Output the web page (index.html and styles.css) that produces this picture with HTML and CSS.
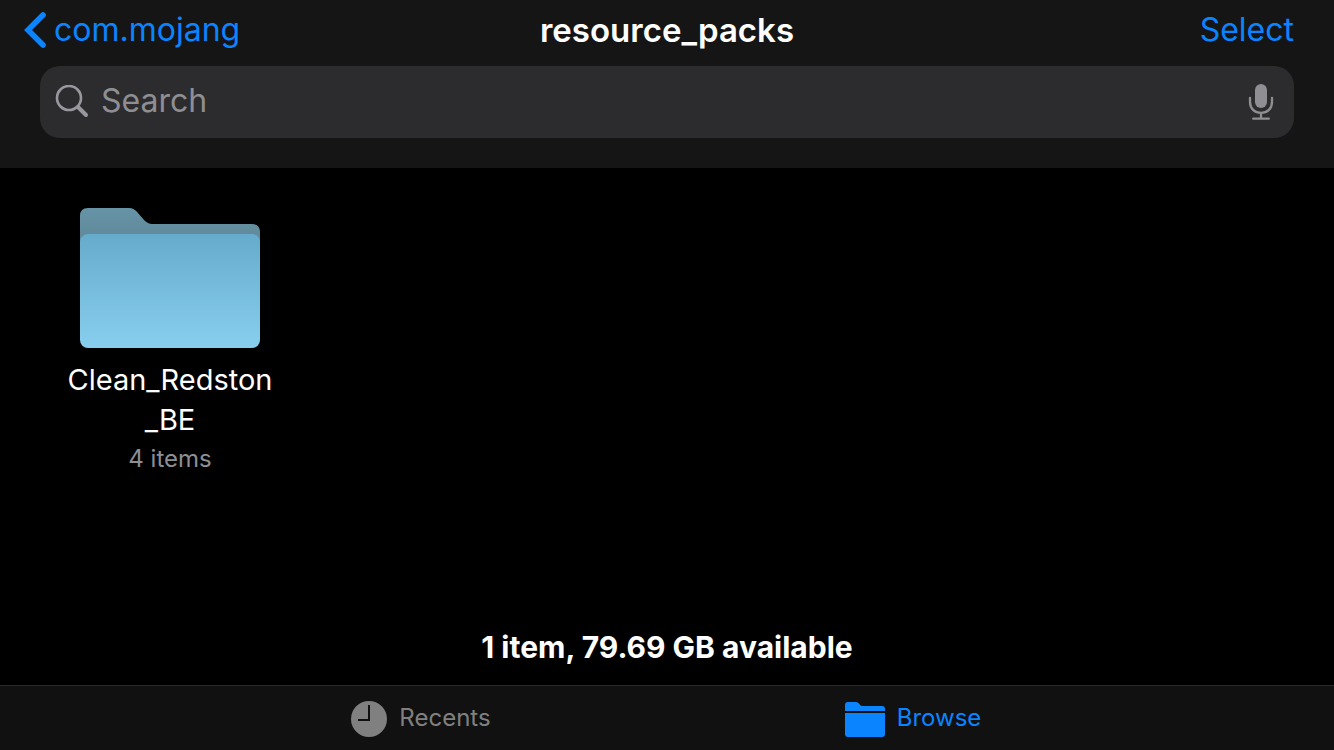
FILE: index.html
```html
<!DOCTYPE html>
<html lang="en">
<head>
<meta charset="utf-8">
<meta name="viewport" content="width=device-width, initial-scale=1">
<title>resource_packs</title>
<link rel="stylesheet" href="styles.css">
</head>
<body>
<header class="header">
  <nav class="navbar">
    <a class="nav-link back" href="#">
      <svg class="back-icon" viewBox="0 0 22 36" aria-hidden="true"><path d="M19 3 4 18l15 15" fill="none" stroke="currentColor" stroke-width="5.600" stroke-linecap="round" stroke-linejoin="miter"/></svg>
      <span>com.mojang</span>
    </a>
    <h1 class="title">resource_packs</h1>
    <button class="nav-link select" type="button">Select</button>
  </nav>
  <div class="search">
    <svg class="search-icon" viewBox="0 0 34 34" aria-hidden="true"><circle cx="14" cy="13" r="12"/><path class="handle" d="m23 22 8 8"/></svg>
    <input class="search-input" type="text" placeholder="Search" aria-label="Search">
    <button class="mic" type="button" aria-label="Dictate">
      <svg class="mic-icon" viewBox="0 0 24 36" aria-hidden="true"><rect x="6" y="0" width="12" height="24" rx="6" fill="currentColor"/><path d="M1 14v4c0 6.500 4.500 10.800 11 10.800S23 24.500 23 18v-4M12 29v5M4.200 34.700h15.600" fill="none" stroke="currentColor" stroke-width="2.300" stroke-linecap="round"/></svg>
    </button>
  </div>
</header>
<main class="content">
  <div class="grid">
    <a class="item" href="#">
      <svg class="folder" viewBox="0 0 180 140" aria-hidden="true">
        <defs>
          <linearGradient id="front" x1="0" y1="0" x2="0" y2="1"><stop offset="0" stop-color="#66abcb"/><stop offset="1" stop-color="#88ceee"/></linearGradient>
          <linearGradient id="rear" x1="0" y1="0" x2="0" y2="1"><stop offset="0" stop-color="#6693a6"/><stop offset="1" stop-color="#5e8798"/></linearGradient>
        </defs>
        <path fill="url(#rear)" d="M0 8Q0 0 8 0H49Q54 0 58 5L64 12Q68 16 72 16H172Q180 16 180 24V40H0Z"/>
        <rect y="26" width="180" height="114" rx="8" fill="url(#front)"/>
      </svg>
      <span class="name">Clean_Redston<wbr>_BE</span>
      <span class="count">4 items</span>
    </a>
  </div>
  <p class="status">1 item, 79.69 GB available</p>
</main>
<nav class="tabbar">
  <a class="tab" href="#">
    <svg class="clock-icon" viewBox="0 0 36 36" aria-hidden="true"><circle cx="18" cy="18" r="18" fill="currentColor"/><path d="M18 4v15H7" fill="none" stroke="#111" stroke-width="2"/></svg>
    <span>Recents</span>
  </a>
  <a class="tab active" href="#" aria-current="page">
    <svg class="browse-icon" viewBox="0 0 40 35" aria-hidden="true" fill="currentColor"><path d="M0 9V3Q0 0 3 0H11Q13 0 14.500 2L15 3Q16 4 18 4H37Q40 4 40 7V9Z"/><path d="M0 11H40V32Q40 35 37 35H3Q0 35 0 32Z"/></svg>
    <span>Browse</span>
  </a>
</nav>
</body>
</html>
```
FILE: styles.css
```css
* {
  box-sizing: border-box;
}

body {
  margin: 0;
  min-height: 100vh;
  display: flex;
  flex-direction: column;
  background: #000;
  color: #fff;
  font-family: Inter, "Liberation Sans", sans-serif;
}

a {
  text-decoration: none;
}

button {
  padding: 0;
  border: 0;
  background: none;
  font: inherit;
}

svg {
  display: block;
  flex: none;
}

.header {
  padding-bottom: 30px;
  background: #151515;
}

.navbar {
  display: grid;
  grid-template-columns: 1fr auto 1fr;
  align-items: center;
  height: 66px;
  padding: 0 40px 6px;
  font-size: 32px;
  line-height: 40px;
}

.nav-link {
  color: #0a84ff;
}

.back {
  display: flex;
  align-items: center;
  gap: 8px;
  justify-self: start;
  margin-left: -16px;
}

.back-icon {
  width: 22px;
  height: 36px;
}

.title {
  margin: 0;
  font-size: 33px;
  font-weight: 600;
}

.select {
  justify-self: end;
}

.search {
  display: flex;
  align-items: center;
  height: 72px;
  margin: 0 40px;
  padding: 0 20px 0 15px;
  border-radius: 20px;
  background: #2c2c2e;
  color: #98989f;
}

.search-icon {
  width: 34px;
  height: 34px;
  fill: none;
  stroke: currentColor;
  stroke-width: 2.6;
  stroke-linecap: round;
}

.handle {
  stroke-width: 4;
}

.search-input {
  flex: 1;
  min-width: 0;
  height: 72px;
  padding: 0 12px 4px;
  border: 0;
  outline: 0;
  background: none;
  color: #fff;
  font: inherit;
  font-size: 32px;
}

.search-input::placeholder {
  color: #8e8e93;
  opacity: 1;
}

.mic {
  color: #8e8e93;
}

.mic-icon {
  width: 26px;
  height: 36px;
}

.content {
  flex: 1;
  display: flex;
  flex-direction: column;
  justify-content: space-between;
  padding: 40px 64px 18px;
}

.grid {
  display: grid;
  grid-template-columns: repeat(auto-fill, 212px);
  gap: 40px;
}

.item {
  display: flex;
  flex-direction: column;
  align-items: center;
  color: #fff;
  text-align: center;
}

.folder {
  width: 180px;
  height: 140px;
}

.name {
  width: 100%;
  margin-top: 12px;
  font-size: 29px;
  line-height: 40px;
}

.count {
  color: #8e8e93;
  font-size: 24px;
  line-height: 38px;
}

.status {
  margin: 0;
  font-size: 30px;
  font-weight: 700;
  line-height: 40px;
  text-align: center;
}

.tabbar {
  display: flex;
  justify-content: center;
  height: 65px;
  padding-top: 2px;
  border-top: 1px solid #2a2a2a;
  background: #111;
}

.tab {
  display: flex;
  flex: 0 1 492px;
  align-items: center;
  justify-content: center;
  gap: 12px;
  color: #808080;
  font-size: 24px;
  line-height: 28px;
}

.tab span {
  padding-bottom: 2px;
}

.active {
  color: #0a84ff;
}

.clock-icon {
  width: 36px;
  height: 36px;
}

.browse-icon {
  width: 40px;
  height: 35px;
}
```
